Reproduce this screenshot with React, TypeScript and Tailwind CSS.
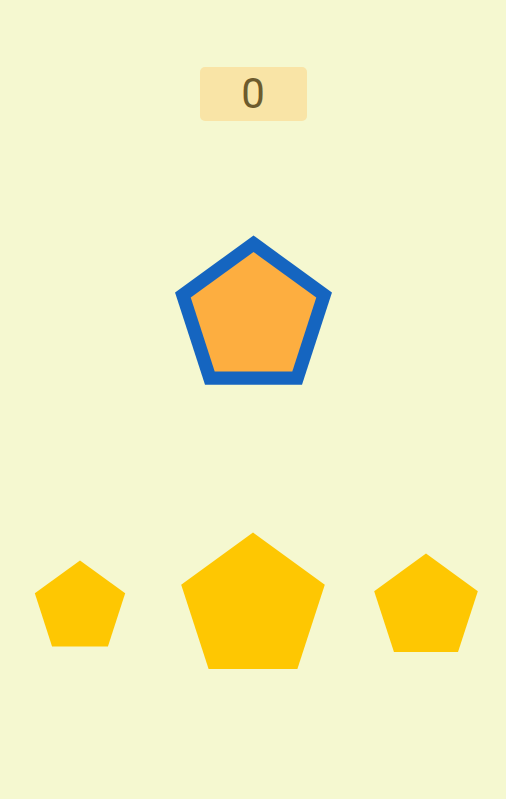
import React from "react";

function pentagon(cx: number, cy: number, r: number) {
  return [0, 1, 2, 3, 4]
    .map((k) => {
      const a = ((-90 + 72 * k) * Math.PI) / 180;
      return `${(cx + r * Math.cos(a)).toFixed(2)},${(cy + r * Math.sin(a)).toFixed(2)}`;
    })
    .join(" ");
}

function Pentagon({ r, size }: { r: number; size: number }) {
  const c = size / 2;
  return (
    <svg width={size} height={size} viewBox={`0 0 ${size} ${size}`}>
      <polygon points={pentagon(c, c, r)} fill="#fec702" />
    </svg>
  );
}

export default function App() {
  return (
    <div className="flex min-h-[799px] flex-col items-center overflow-hidden bg-[#f5f8d0] pt-[67px] font-['Roboto',sans-serif]">
      <div className="flex h-[54px] w-[107px] items-center justify-center rounded-[5px] bg-[#f9e4a6] text-[42px] leading-none text-[#6d5b2d]">
        0
      </div>

      <svg className="mt-[112px]" width={170} height={170} viewBox="0 0 170 170">
        <polygon points={pentagon(85.5, 85, 82.5)} fill="#1565c0" />
        <polygon points={pentagon(85.5, 85, 66)} fill="#fdae40" />
      </svg>

      <div className="mt-[125px] flex w-full justify-center">
        <div className="flex w-[173px] flex-none justify-center">
          <Pentagon r={47.5} size={160} />
        </div>
        <div className="flex w-[173px] flex-none justify-center">
          <Pentagon r={75.5} size={160} />
        </div>
        <div className="flex w-[173px] flex-none justify-center">
          <Pentagon r={54.5} size={160} />
        </div>
      </div>
    </div>
  );
}
